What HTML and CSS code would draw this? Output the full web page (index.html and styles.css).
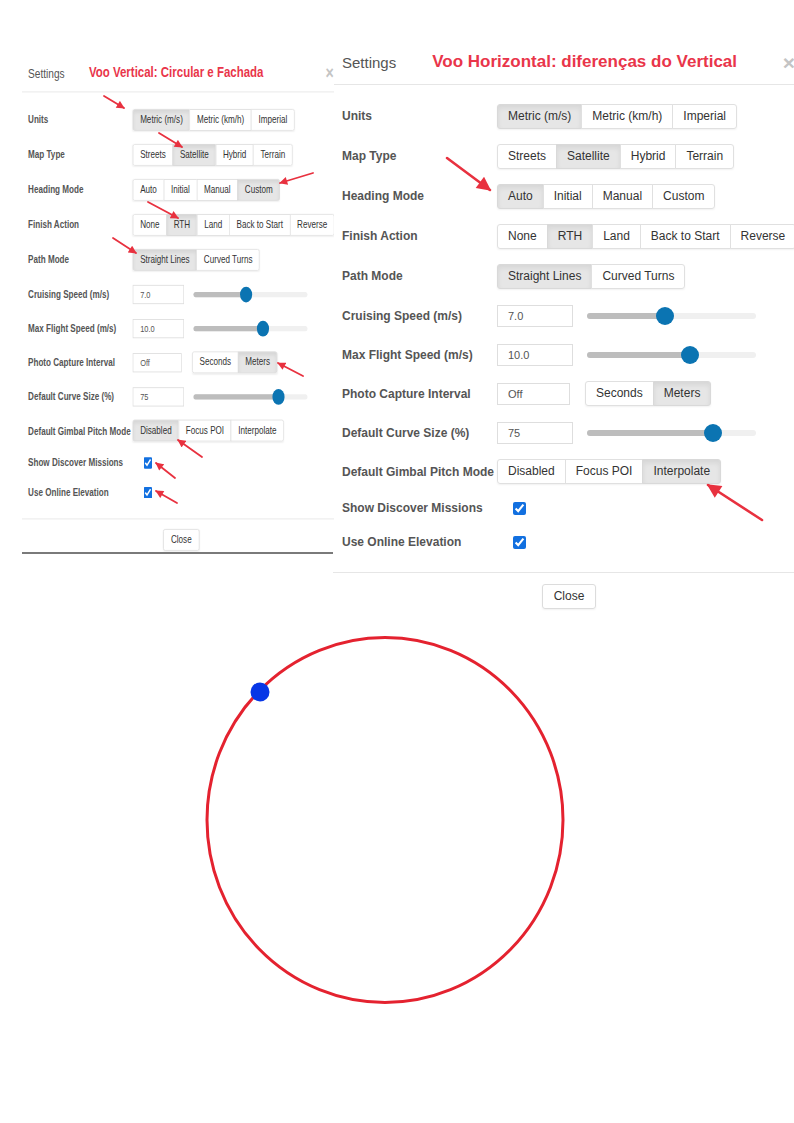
FILE: index.html
```html
<!DOCTYPE html>
<html lang="pt">
<head>
<meta charset="utf-8">
<title>Settings</title>
<link rel="stylesheet" href="styles.css">
</head>
<body>
<div class="page">
  <div class="top">
    <div class="shot shot-left">
      <div class="modal scaled">
        <div class="modal-head">
          <span class="modal-title">Settings</span>
          <span class="note">Voo Vertical: Circular e Fachada</span>
          <span class="close-x">×</span>
        </div>
        <div class="modal-body">
          <div class="row row-btn"><div class="lbl">Units</div><div class="grp"><span class="b on">Metric (m/s)</span><span class="b">Metric (km/h)</span><span class="b">Imperial</span></div></div>
          <div class="row row-btn"><div class="lbl">Map Type</div><div class="grp"><span class="b">Streets</span><span class="b on">Satellite</span><span class="b">Hybrid</span><span class="b">Terrain</span></div></div>
          <div class="row row-btn"><div class="lbl">Heading Mode</div><div class="grp"><span class="b">Auto</span><span class="b">Initial</span><span class="b">Manual</span><span class="b on">Custom</span></div></div>
          <div class="row row-btn"><div class="lbl">Finish Action</div><div class="grp"><span class="b">None</span><span class="b on">RTH</span><span class="b">Land</span><span class="b">Back to Start</span><span class="b">Reverse</span></div></div>
          <div class="row row-btn"><div class="lbl">Path Mode</div><div class="grp"><span class="b on">Straight Lines</span><span class="b">Curved Turns</span></div></div>
          <div class="row row-in"><div class="lbl">Cruising Speed (m/s)</div><div class="inp">7.0</div><div class="slider"><div class="fill" style="width:46%"></div><div class="thumb" style="left:46%"></div></div></div>
          <div class="row row-in"><div class="lbl">Max Flight Speed (m/s)</div><div class="inp">10.0</div><div class="slider"><div class="fill" style="width:61%"></div><div class="thumb" style="left:61%"></div></div></div>
          <div class="row row-in"><div class="lbl">Photo Capture Interval</div><div class="inp inp-short">Off</div><div class="grp grp-side"><span class="b">Seconds</span><span class="b on">Meters</span></div></div>
          <div class="row row-in"><div class="lbl">Default Curve Size (%)</div><div class="inp">75</div><div class="slider"><div class="fill" style="width:74.6%"></div><div class="thumb" style="left:74.6%"></div></div></div>
          <div class="row row-in"><div class="lbl">Default Gimbal Pitch Mode</div><div class="grp"><span class="b on">Disabled</span><span class="b">Focus POI</span><span class="b">Interpolate</span></div></div>
          <div class="row row-chk"><div class="lbl">Show Discover Missions</div><input class="chk" type="checkbox" checked></div>
          <div class="row row-chk"><div class="lbl">Use Online Elevation</div><input class="chk" type="checkbox" checked></div>
        </div>
        <div class="modal-foot"><span class="btn-close">Close</span></div>
      </div>
    </div>

    <div class="shot shot-right">
      <div class="modal">
        <div class="modal-head">
          <span class="modal-title">Settings</span>
          <span class="note">Voo Horizontal: diferenças do Vertical</span>
          <span class="close-x">×</span>
        </div>
        <div class="modal-body">
          <div class="row row-btn"><div class="lbl">Units</div><div class="grp"><span class="b on">Metric (m/s)</span><span class="b">Metric (km/h)</span><span class="b">Imperial</span></div></div>
          <div class="row row-btn"><div class="lbl">Map Type</div><div class="grp"><span class="b">Streets</span><span class="b on">Satellite</span><span class="b">Hybrid</span><span class="b">Terrain</span></div></div>
          <div class="row row-btn"><div class="lbl">Heading Mode</div><div class="grp"><span class="b on">Auto</span><span class="b">Initial</span><span class="b">Manual</span><span class="b">Custom</span></div></div>
          <div class="row row-btn"><div class="lbl">Finish Action</div><div class="grp"><span class="b">None</span><span class="b on">RTH</span><span class="b">Land</span><span class="b">Back to Start</span><span class="b">Reverse</span></div></div>
          <div class="row row-btn"><div class="lbl">Path Mode</div><div class="grp"><span class="b on">Straight Lines</span><span class="b">Curved Turns</span></div></div>
          <div class="row row-in"><div class="lbl">Cruising Speed (m/s)</div><div class="inp">7.0</div><div class="slider"><div class="fill" style="width:46%"></div><div class="thumb" style="left:46%"></div></div></div>
          <div class="row row-in"><div class="lbl">Max Flight Speed (m/s)</div><div class="inp">10.0</div><div class="slider"><div class="fill" style="width:61%"></div><div class="thumb" style="left:61%"></div></div></div>
          <div class="row row-in"><div class="lbl">Photo Capture Interval</div><div class="inp inp-short">Off</div><div class="grp grp-side"><span class="b">Seconds</span><span class="b on">Meters</span></div></div>
          <div class="row row-in"><div class="lbl">Default Curve Size (%)</div><div class="inp">75</div><div class="slider"><div class="fill" style="width:74.6%"></div><div class="thumb" style="left:74.6%"></div></div></div>
          <div class="row row-in"><div class="lbl">Default Gimbal Pitch Mode</div><div class="grp"><span class="b">Disabled</span><span class="b">Focus POI</span><span class="b on">Interpolate</span></div></div>
          <div class="row row-chk"><div class="lbl">Show Discover Missions</div><input class="chk" type="checkbox" checked></div>
          <div class="row row-chk"><div class="lbl">Use Online Elevation</div><input class="chk" type="checkbox" checked></div>
        </div>
        <div class="modal-foot"><span class="btn-close">Close</span></div>
      </div>
    </div>

    <svg class="arrows" width="794" height="620" viewBox="0 0 794 620" aria-hidden="true">
      <defs>
        <marker id="ah" viewBox="0 0 10 10" refX="9" refY="5" markerWidth="9" markerHeight="8" orient="auto" markerUnits="userSpaceOnUse">
          <path d="M0,0 L10,5 L0,10 z" fill="#e8313f"/>
        </marker>
        <marker id="ahl" viewBox="0 0 10 10" refX="9" refY="5" markerWidth="17" markerHeight="14" orient="auto" markerUnits="userSpaceOnUse">
          <path d="M0,0 L10,5 L0,10 z" fill="#e8313f"/>
        </marker>
      </defs>
      <g stroke="#e8313f" stroke-width="1.8" fill="none" stroke-linecap="round">
        <line x1="104" y1="96" x2="124" y2="108" marker-end="url(#ah)"/>
        <line x1="159" y1="133" x2="182" y2="147" marker-end="url(#ah)"/>
        <line x1="313" y1="173" x2="280" y2="183" marker-end="url(#ah)"/>
        <line x1="148" y1="202" x2="178" y2="218" marker-end="url(#ah)"/>
        <line x1="113" y1="238" x2="136" y2="253" marker-end="url(#ah)"/>
        <line x1="303" y1="376" x2="278" y2="363" marker-end="url(#ah)"/>
        <line x1="202" y1="457" x2="178" y2="440" marker-end="url(#ah)"/>
        <line x1="175" y1="478" x2="156" y2="463" marker-end="url(#ah)"/>
        <line x1="177" y1="503" x2="156" y2="491" marker-end="url(#ah)"/>
      </g>
      <g stroke="#e8313f" stroke-width="2.6" fill="none" stroke-linecap="round">
        <line x1="447" y1="158" x2="490" y2="190" marker-end="url(#ahl)"/>
        <line x1="762" y1="520" x2="708" y2="485" marker-end="url(#ahl)"/>
      </g>
    </svg>
  </div>

  <svg class="diagram" width="794" height="503" viewBox="0 0 794 503" aria-hidden="true">
    <ellipse cx="385" cy="200" rx="178" ry="182.5" fill="none" stroke="#e4222f" stroke-width="3"/>
    <circle cx="260" cy="72" r="9.5" fill="#0736e6"/>
  </svg>
</div>
</body>
</html>
```
FILE: styles.css
```css
html, body {
  margin: 0;
  padding: 0;
  background: #fff;
}
body {
  font-family: "Liberation Sans", Arial, sans-serif;
  color: #333;
}
.page {
  width: 794px;
  height: 1123px;
  overflow: hidden;
}
.top {
  position: relative;
  height: 620px;
  display: flex;
  align-items: flex-start;
}
.shot {
  flex: none;
}
.shot-left {
  margin: 53px 0 0 22px;
  width: 312px;
  height: 499px;
  overflow: hidden;
  border-bottom: 2px solid #7a7a7a;
}
.shot-right {
  margin-top: 40px;
  margin-left: -1px;
  width: 472px;
}
.modal {
  width: 472px;
  background: #fff;
}
.scaled {
  transform: scale(0.675, 0.875);
  transform-origin: 0 0;
}
.modal-head {
  height: 44px;
  display: flex;
  align-items: center;
  padding: 0 10px 0 9px;
  border-bottom: 1px solid #e6e6e6;
}
.modal-title {
  font-size: 15px;
  color: #555;
  margin-right: 36px;
}
.note {
  font-size: 17px;
  font-weight: bold;
  color: #e9354a;
  white-space: nowrap;
}
.close-x {
  margin-left: auto;
  font-size: 21px;
  font-weight: bold;
  color: #c4c4c4;
  line-height: 1;
}
.modal-body {
  padding: 11px 0 13px 9px;
}
.row {
  display: flex;
  align-items: center;
  white-space: nowrap;
}
.row-btn { height: 40px; }
.row-in { height: 39px; }
.row-chk { height: 34px; }
.lbl {
  flex: none;
  width: 155px;
  font-size: 12px;
  font-weight: bold;
  color: #555;
}
.grp {
  display: flex;
  border-radius: 3px;
  box-shadow: 0 1px 2px rgba(0, 0, 0, 0.06);
}
.grp-side {
  margin-left: 15px;
}
.b {
  box-sizing: border-box;
  height: 25px;
  line-height: 23px;
  padding: 0 10px;
  border: 1px solid #e0e0e0;
  font-size: 12px;
  color: #333;
  background: #fff;
}
.b + .b {
  margin-left: -1px;
}
.b:first-child {
  border-radius: 3px 0 0 3px;
}
.b:last-child {
  border-radius: 0 3px 3px 0;
}
.b.on {
  background: #e6e6e6;
  border-color: #d9d9d9;
  box-shadow: inset 0 3px 5px rgba(0, 0, 0, 0.07);
}
.inp {
  box-sizing: border-box;
  width: 76px;
  height: 22px;
  line-height: 20px;
  padding-left: 10px;
  border: 1px solid #dedede;
  font-size: 11px;
  color: #555;
}
.inp-short {
  width: 73px;
}
.slider {
  position: relative;
  margin-left: 14px;
  width: 169px;
  height: 6px;
  border-radius: 3px;
  background: #f0f0f0;
}
.fill {
  height: 100%;
  border-radius: 3px;
  background: #bdbdbd;
}
.thumb {
  position: absolute;
  top: 50%;
  width: 18px;
  height: 18px;
  border-radius: 50%;
  background: #0b74b2;
  transform: translate(-50%, -50%);
}
.chk {
  margin: 0 0 0 16px;
  width: 13px;
  height: 13px;
  accent-color: #1270e0;
}
.modal-foot {
  border-top: 1px solid #e6e6e6;
  padding: 11px 0 8px;
  text-align: center;
}
.btn-close {
  display: inline-block;
  box-sizing: border-box;
  height: 25px;
  line-height: 23px;
  padding: 0 11px;
  border: 1px solid #dcdcdc;
  border-radius: 3px;
  font-size: 12px;
  color: #333;
  box-shadow: 0 1px 2px rgba(0, 0, 0, 0.06);
}
.arrows {
  position: absolute;
  top: 0;
  left: 0;
  pointer-events: none;
}
.diagram {
  display: block;
}
```
